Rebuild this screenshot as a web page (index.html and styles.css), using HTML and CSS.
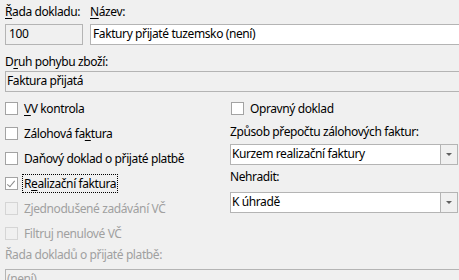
FILE: index.html
```html
<!DOCTYPE html>
<html lang="cs">
<head>
  <meta charset="UTF-8" />
  <title>Řada dokladů</title>
  <link rel="stylesheet" href="styles.css">
</head>
<body>
  <div class="form">
    <div class="top-row">
      <div class="field series">
        <div class="label"><u>Ř</u>ada dokladu:</div>
        <div class="box readonly pad3">100</div>
      </div>
      <div class="field name">
        <div class="label"><u>N</u>ázev:</div>
        <div class="box wide pad2">Faktury přijaté tuzemsko (není)</div>
      </div>
    </div>

    <div class="label second">D<u>r</u>uh pohybu zboží:</div>
    <div class="box readonly wide">Faktura přijatá</div>

    <div class="columns">
      <div class="col left">
        <div class="check"><span class="cb"></span><span><u>V</u>V kontrola</span></div>
        <div class="check"><span class="cb"></span><span>Zálohová fa<u>k</u>tura</span></div>
        <div class="check"><span class="cb"></span><span>Daňový doklad o přijaté platbě</span></div>
        <div class="check"><span class="cb checked"></span><span class="focus">R<u>e</u>alizační faktura</span></div>
        <div class="check disabled"><span class="cb"></span><span>Zjednodušené zadávání VČ</span></div>
        <div class="check disabled"><span class="cb"></span><span>Filtruj nenulové VČ</span></div>
      </div>
      <div class="col right">
        <div class="check"><span class="cb"></span><span>Opravný doklad</span></div>
        <div class="label rate">Způsob přepočtu zálohových faktur:</div>
        <div class="combo">
          <span class="combo-text">Kurzem realizační faktury</span>
          <span class="combo-btn"><span class="arrow"></span></span>
        </div>
        <div class="label hold">Nehradit:</div>
        <div class="combo">
          <span class="combo-text">K úhradě</span>
          <span class="combo-btn"><span class="arrow"></span></span>
        </div>
      </div>
    </div>

    <div class="label disabled-text payment">Řada dokladů o přijaté platbě:</div>
    <div class="box readonly wide disabled-text">(není)</div>
  </div>
</body>
</html>
```

FILE: styles.css
```css
html, body {
  margin: 0;
  padding: 0;
  overflow: hidden;
  height: 100%;
}
body {
  background: #f0f0f0;
  color: #000;
  font-family: 'Noto Sans', 'Open Sans', sans-serif;
  font-size: 12px;
  letter-spacing: -0.4px;
}
u { text-decoration-thickness: 1px; text-underline-offset: 2px; }
.form {
  padding: 4px 0 0 5px;
}
.label {
  line-height: 16px;
  height: 16px;
  white-space: nowrap;
}
.top-row {
  display: flex;
  gap: 7px;
}
.field .label {
  margin-bottom: 4px;
}
.series { width: 78px; flex: none; }
.name { flex: 1; }
.box {
  box-sizing: border-box;
  height: 21px;
  line-height: 18px;
  border: 1px solid #b4b4b4;
  background: #fff;
  padding: 0 1px;
  white-space: nowrap;
  overflow: hidden;
}
.box.readonly { background: #f0f0f0; }
.box.wide { margin-right: -6px; }
.pad3 { padding-left: 3px; }
.pad2 { padding-left: 2px; }
.label.second {
  margin-top: 9px;
  margin-bottom: 1px;
}
.columns {
  display: grid;
  grid-template-columns: 225px 228px;
  margin-top: 4px;
}
.col {
  display: flex;
  flex-direction: column;
}
.check {
  display: flex;
  align-items: center;
  gap: 6px;
  height: 25px;
  white-space: nowrap;
}
.col.right .check { padding-left: 1px; }
.cb {
  box-sizing: border-box;
  width: 13px;
  height: 13px;
  border: 1px solid #a3a3a3;
  background: #fff;
  position: relative;
  flex: none;
}
.cb.checked::after {
  content: '';
  position: absolute;
  left: 3px;
  top: 1px;
  width: 3px;
  height: 7px;
  border: solid #8a8a8a;
  border-width: 0 1px 1px 0;
  transform: rotate(40deg);
}
.focus {
  outline: 1px dotted #000;
  outline-offset: 0;
  padding: 0 1px;
  margin-left: -1px;
}
.check.disabled { color: #a0a0a0; }
.check.disabled .cb {
  border-color: #d5d5d5;
  background: #f0f0f0;
}
.label.rate { margin-top: 3px; margin-bottom: 4px; }
.label.hold { margin-bottom: 7px; }
.combo {
  box-sizing: border-box;
  display: flex;
  height: 21px;
  border: 1px solid #b4b4b4;
  background: #fff;
  margin-bottom: 4px;
}
.combo-text {
  flex: 1;
  line-height: 18px;
  padding-left: 1px;
}
.combo-btn {
  width: 16px;
  border-left: 1px solid #b4b4b4;
  background: #f0f0f0;
  display: flex;
  align-items: center;
  justify-content: center;
}
.arrow {
  width: 0;
  height: 0;
  border-left: 3px solid transparent;
  border-right: 3px solid transparent;
  border-top: 3px solid #606060;
}
.disabled-text { color: #a0a0a0; }
.label.payment { margin-top: 1px; margin-bottom: 6px; }
```
